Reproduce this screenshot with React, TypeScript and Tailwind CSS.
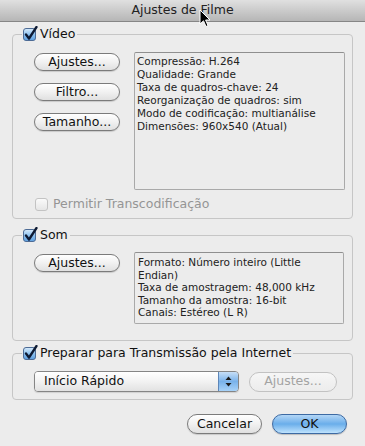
import React from 'react';

const Checked: React.FC = () => (
  <svg width="16" height="16" viewBox="0 0 16 16" className="block">
    <defs>
      <linearGradient id="cbfill" x1="0" y1="0" x2="0" y2="1">
        <stop offset="0" stopColor="#d9ecfc" />
        <stop offset="0.5" stopColor="#8ec2ef" />
        <stop offset="1" stopColor="#5d9fe0" />
      </linearGradient>
    </defs>
    <rect x="1.5" y="2.5" width="12" height="12" rx="2.5" fill="url(#cbfill)" stroke="#4d6b95" />
    <path d="M4 8.5 L7 12.5 L14.5 1" fill="none" stroke="#0d1a33" strokeWidth="2.3" strokeLinecap="round" strokeLinejoin="round" />
  </svg>
);

const Unchecked: React.FC = () => (
  <div className="w-[13px] h-[13px] rounded-[3px] border border-[#c3c3c3] bg-linear-to-b from-[#fafafa] to-[#e6e6e6]" />
);

const AquaButton: React.FC<{ label: string; className?: string; disabled?: boolean }> = ({
  label,
  className = '',
  disabled,
}) => (
  <div
    className={`flex items-center justify-center rounded-full border ${
      disabled
        ? 'border-[#c2c2c2] text-[#a3a3a3] bg-linear-to-b from-[#f6f6f6] to-[#ececec]'
        : 'border-[#7b7b7b] text-[#111] bg-linear-to-b from-[#ffffff] via-[#f1f1f1] to-[#e0e0e0] shadow-[0_1px_1px_rgba(0,0,0,0.15)]'
    } ${className}`}
  >
    {label}
  </div>
);

// Fieldset with a checkbox legend, like the Aqua group boxes
const Group: React.FC<{ label: string; className?: string; children: React.ReactNode }> = ({
  label,
  className = '',
  children,
}) => (
  <fieldset className={`border border-[#c6c6c6] rounded-[4px] ${className}`}>
    <legend className="ml-[9px] pr-[2px] h-[16px] flex items-center">
      <Checked />
      <span className="ml-[2px] text-[12.5px] text-[#111] leading-[16px]">{label}</span>
    </legend>
    {children}
  </fieldset>
);

export default function App() {
  return (
    <div className="relative w-[365px] h-[446px] overflow-hidden bg-[#ececec] font-['DejaVu_Sans',sans-serif]">
      {/* Title bar */}
      <div className="h-[22px] flex items-center justify-center bg-linear-to-b from-[#e0e0e0] to-[#b6b6b6] border-b border-[#868686] text-[12.5px] text-[#222]">
        Ajustes de Filme
      </div>

      <div className="pl-[12px] pr-[12px]">
        {/* Vídeo */}
        <Group label="Vídeo" className="mt-[4px]">
          <div className="flex items-start pt-[10px] pl-[21px]">
            <div className="flex flex-col gap-[12px] mt-[1px] text-[12.5px]">
              <AquaButton label="Ajustes..." className="w-[86px] h-[18px]" />
              <AquaButton label="Filtro..." className="w-[86px] h-[18px]" />
              <AquaButton label="Tamanho..." className="w-[86px] h-[18px]" />
            </div>
            <div className="ml-[14px] w-[211px] h-[138px] border border-[#a9a9a9] border-t-[#8f8f8f] rounded-[2px] pt-[2px] pl-[2px] text-[10.5px] leading-[13px] text-[#222] whitespace-nowrap">
              <div>Compressão: H.264</div>
              <div>Qualidade: Grande</div>
              <div>Taxa de quadros-chave: 24</div>
              <div>Reorganização de quadros: sim</div>
              <div>Modo de codificação: multianálise</div>
              <div>Dimensões: 960x540 (Atual)</div>
            </div>
          </div>
          <div className="flex items-center mt-[8px] pl-[22px] pb-[7px] h-[13px] box-content">
            <Unchecked />
            <span className="ml-[5px] text-[12.5px] text-[#959595]">Permitir Transcodificação</span>
          </div>
        </Group>

        {/* Som */}
        <Group label="Som" className="mt-[8px]">
          <div className="flex items-start pt-[9px] pl-[21px] pb-[16px]">
            <AquaButton label="Ajustes..." className="w-[86px] h-[18px] mt-[2px] text-[12.5px]" />
            <div className="ml-[14px] w-[210px] h-[72px] border border-[#a9a9a9] border-t-[#8f8f8f] rounded-[2px] pt-[3px] pl-[3px] text-[10.5px] leading-[12.5px] text-[#222] whitespace-nowrap">
              <div>Formato: Número inteiro (Little</div>
              <div>Endian)</div>
              <div>Taxa de amostragem: 48,000 kHz</div>
              <div>Tamanho da amostra: 16-bit</div>
              <div>Canais: Estéreo (L R)</div>
            </div>
          </div>
        </Group>

        {/* Internet */}
        <Group label="Preparar para Transmissão pela Internet" className="mt-[4px]">
          <div className="flex items-center pt-[10px] pl-[21px] pb-[7px]">
            <div className="w-[205px] h-[21px] flex rounded-[4px] border border-[#858585] overflow-hidden shadow-[0_1px_1px_rgba(0,0,0,0.12)]">
              <div className="flex-1 flex items-center pl-[9px] text-[12.5px] text-[#111] bg-linear-to-b from-[#ffffff] via-[#f2f2f2] to-[#e2e2e2]">
                Início Rápido
              </div>
              <div className="w-[20px] flex items-center justify-center border-l border-[#5d86b8] bg-linear-to-b from-[#c6def6] via-[#79b2ea] to-[#a7d2f8]">
                <svg width="7" height="11" viewBox="0 0 7 11">
                  <path d="M3.5 0.5 L6.5 4 L0.5 4 Z" fill="#1b1b1b" />
                  <path d="M3.5 10.5 L6.5 7 L0.5 7 Z" fill="#1b1b1b" />
                </svg>
              </div>
            </div>
            <AquaButton label="Ajustes..." disabled className="ml-[10px] w-[88px] h-[20px] text-[12.5px]" />
          </div>
        </Group>

        {/* Dialog buttons */}
        <div className="flex justify-end gap-[10px] mt-[14px] pr-[6px] text-[12.5px]">
          <AquaButton label="Cancelar" className="w-[75px] h-[20px]" />
          <div className="w-[75px] h-[20px] flex items-center justify-center rounded-full border border-[#3d6aa3] text-[#111] bg-linear-to-b from-[#b3d6f6] via-[#6aaeea] to-[#bfe3fd] shadow-[0_1px_1px_rgba(0,0,0,0.2)]">
            OK
          </div>
        </div>
      </div>

      {/* Mouse pointer over the title */}
      <svg width="13" height="20" viewBox="0 0 13 20" className="absolute left-[199px] top-[9px]">
        <path d="M1 1 L1 15 L4.5 11.8 L7 17.5 L9 16.6 L6.6 11 L11 11 Z" fill="#000" stroke="#fff" strokeWidth="1" strokeLinejoin="round" />
      </svg>
    </div>
  );
}
